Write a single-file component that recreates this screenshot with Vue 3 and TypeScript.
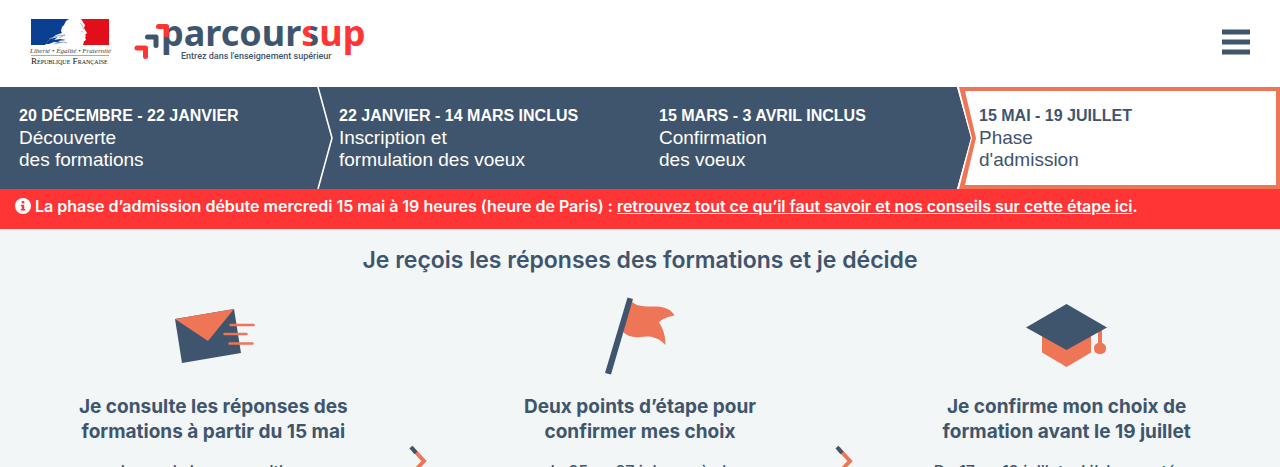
<script setup lang="ts">
interface Step {
  dates: string
  lines: string[]
  current?: boolean
  chevron?: boolean
}

interface Card {
  icon: 'mail' | 'flag' | 'cap'
  title: string[]
  text: string
}

const steps: Step[] = [
  { dates: '20 DÉCEMBRE - 22 JANVIER', lines: ['Découverte', 'des formations'], chevron: true },
  { dates: '22 JANVIER - 14 MARS INCLUS', lines: ['Inscription et', 'formulation des voeux'] },
  { dates: '15 MARS - 3 AVRIL INCLUS', lines: ['Confirmation', 'des voeux'] },
  { dates: '15 MAI - 19 JUILLET', lines: ['Phase', "d'admission"], current: true },
]

const cards: Card[] = [
  { icon: 'mail', title: ['Je consulte les réponses des', 'formations à partir du 15 mai'], text: 'Je reçois les propositions' },
  { icon: 'flag', title: ['Deux points d’étape pour', 'confirmer mes choix'], text: 'du 25 au 27 juin, après la' },
  { icon: 'cap', title: ['Je confirme mon choix de', 'formation avant le 19 juillet'], text: 'Du 17 au 19 juillet, si j’ai accepté un' },
]
</script>

<template>
  <div class="page">
    <header class="header">
      <div class="brands">
        <svg class="republic" viewBox="0 0 80 48" role="img" aria-label="République Française">
          <rect x="1" y="1" width="78" height="26" fill="#fff" />
          <path d="M1 1h38l-3 2-2 4-2 2-1 4 1 2-6 2-8 6-3 4H1z" fill="#0b3f92" />
          <path d="M51 1h28v26H53l1-4h1l1-2-1-1 1-2-1-1 2-2-3-5 1-3z" fill="#e20f1b" />
          <path d="M15 26l5-5 8-2-4 3 6-1 6 1-8 1 4 2-8-1-5 2z" fill="#0b3f92" />
          <path d="M19 21l8-3 8-1-6 3M24 26l9-2 4 1" fill="none" stroke="#7d96c5" stroke-width=".8" />
          <path d="M50 5l2 2 2 5M51 13l2 1" fill="none" stroke="#8b8e98" stroke-width=".6" />
          <text x="0" y="35" class="motto">Liberté • Égalité • Fraternité</text>
          <path d="M1 37.500h78" stroke="#555" stroke-width=".5" />
          <text x="1" y="46" class="name">R<tspan class="small">ÉPUBLIQUE</tspan> F<tspan class="small">RANÇAISE</tspan></text>
        </svg>
        <a href="#" class="logo" aria-label="Parcoursup">
          <svg viewBox="0 0 232 46">
            <defs>
              <linearGradient id="split" gradientUnits="userSpaceOnUse" x1="0" y1="0" x2="232" y2="0">
                <stop offset=".72" stop-color="#3f556d" />
                <stop offset=".72" stop-color="#ff3535" />
                <stop offset=".765" stop-color="#ff3535" />
                <stop offset=".765" stop-color="#3f556d" />
                <stop offset=".795" stop-color="#3f556d" />
                <stop offset=".795" stop-color="#ff3535" />
              </linearGradient>
            </defs>
            <text x="27" y="27" class="word" fill="url(#split)">parcoursup</text>
            <g fill="none" stroke-width="5" stroke-linejoin="round" stroke-linecap="round">
              <path d="M24.500 7.500h8V16" stroke="#ff3535" />
              <path d="M13.500 18H22v8.500" stroke="#3f556d" />
              <path d="M3 29h8.500v8.500" stroke="#ff3535" />
            </g>
            <text x="47" y="40" class="tagline">Entrez dans l'enseignement supérieur</text>
          </svg>
        </a>
      </div>
      <button class="burger" type="button" aria-label="Menu">
        <svg viewBox="0 0 28 26"><path d="M0 3h28M0 13h28M0 23h28" stroke="#3f556d" stroke-width="5" /></svg>
      </button>
    </header>

    <ol class="steps">
      <li v-for="step in steps" :key="step.dates" class="step" :class="{ current: step.current }">
        <svg v-if="step.chevron" class="chevron" viewBox="0 0 16 102" preserveAspectRatio="none" aria-hidden="true">
          <path d="M1 0l14 51L1 102" fill="none" stroke="#fff" stroke-width="1.600" />
        </svg>
        <svg v-if="step.current" class="notch" viewBox="0 0 20 102" preserveAspectRatio="none" aria-hidden="true">
          <path d="M0 0h7v102H0z" fill="#fff" />
          <path d="M0 0l14 51L0 102z" fill="#3f556d" />
          <path d="M14 51L0 0h2l14 51L2 102H0z" fill="#fff" />
          <path d="M2 0h5l12 51L7 102H2l13-51z" fill="#ee7556" />
        </svg>
        <a href="#" class="step-link">
          <strong>{{ step.dates }}</strong>
          <span v-for="line in step.lines" :key="line">{{ line }}</span>
        </a>
      </li>
    </ol>

    <p class="alert">
      <svg class="info" viewBox="0 0 16 16" aria-hidden="true">
        <circle cx="8" cy="8" r="8" fill="#fff" />
        <path d="M6.700 3h2.600v2.400H6.700zM5.800 6.700h3.400v4.200h1v1.600H5.800v-1.600h1V8.300h-1z" fill="#ff3535" />
      </svg>
      <span>La phase d’admission débute mercredi 15 mai à 19 heures (heure de Paris) : <a href="#">retrouvez tout ce qu’il faut savoir et nos conseils sur cette étape ici</a>.</span>
    </p>

    <main class="content">
      <h1>Je reçois les réponses des formations et je décide</h1>
      <ul class="cards">
        <li v-for="(card, i) in cards" :key="card.icon" class="card">
          <div class="body">
            <svg v-if="card.icon === 'mail'" class="icon" viewBox="0 0 120 80" aria-hidden="true">
              <path d="M22 24l59-10 7 44-59 10z" fill="#3f556d" />
              <path d="M22 24l59-10-26 32z" fill="#ee7556" />
              <path d="M77.500 30h23M71.500 39h22M76.500 48.500h23" stroke="#ee7556" stroke-width="2.500" stroke-linecap="round" />
            </svg>
            <svg v-else-if="card.icon === 'flag'" class="icon" viewBox="0 0 120 80" aria-hidden="true">
              <path d="M52 7c8 6 16 4 25 4.500 9 .5 15 4 17.500 9-6 1-12 3-15.500 7 4 6 6.500 13 6.500 22.500C77 41 69 41 60 42c-7 1-13-1-18-6z" fill="#ee7556" />
              <path d="M47.500 2.500L53 4 31 79.500 25 78z" fill="#3f556d" />
            </svg>
            <svg v-else class="icon" viewBox="0 0 120 80" aria-hidden="true">
              <path d="M35 40h49v17.500L59.500 72 35 57.500z" fill="#ee7556" />
              <path d="M91 34h4v17h-4z" fill="#ee7556" />
              <rect x="87" y="48" width="12" height="11" rx="5" fill="#ee7556" />
              <path d="M59.500 9L100 32.500 59.500 55 19 32.500z" fill="#3f556d" />
            </svg>
            <h2><template v-for="(line, n) in card.title" :key="line"><br v-if="n">{{ line }}</template></h2>
            <p>{{ card.text }}</p>
          </div>
          <svg v-if="i < 2" class="arrow" viewBox="0 0 16 30" aria-hidden="true">
            <path d="M1 2l12 13L1 28" fill="none" stroke="#ee7556" stroke-width="4" />
            <path d="M0 1l5 6" fill="none" stroke="#3f556d" stroke-width="4" />
          </svg>
        </li>
      </ul>
    </main>
  </div>
</template>

<style>
body {
  margin: 0;
  background: #f2f6f7;
}
</style>

<style scoped>
.page {
  color: #3f556d;
  font-family: Inter, 'Liberation Sans', sans-serif;
}
.header {
  display: flex;
  justify-content: space-between;
  align-items: center;
  box-sizing: border-box;
  height: 87px;
  padding: 0 30px 4px;
  background: #fff;
}
.brands {
  display: flex;
  align-items: center;
  gap: 24px;
}
.republic {
  display: block;
  width: 80px;
  height: 48px;
  overflow: visible;
}
.motto {
  font: italic 7px 'Liberation Serif', serif;
  fill: #444;
}
.name {
  font: 9px 'Liberation Serif', serif;
  fill: #111;
}
.small {
  font-size: 6px;
}
.logo svg {
  display: block;
  width: 232px;
  height: 46px;
  overflow: visible;
}
.word {
  font: 700 36px 'Noto Sans', sans-serif;
}
.tagline {
  font: 500 9px Roboto, sans-serif;
  fill: #3f556d;
}
.burger {
  padding: 0;
  border: 0;
  background: none;
  cursor: pointer;
}
.burger svg {
  display: block;
  width: 28px;
  height: 26px;
}
.steps {
  display: grid;
  grid-template-columns: repeat(4, 1fr);
  margin: 0;
  padding: 0;
  list-style: none;
  background: #3f556d;
}
.step {
  position: relative;
  color: #fff;
}
.step.current {
  background: #fff;
  color: #3f556d;
  box-shadow: inset 0 0 0 4px #ee7556;
}
.step-link {
  position: relative;
  display: block;
  padding: 18px 19px;
  color: inherit;
  font: 19px/22px 'Liberation Sans', Arial, sans-serif;
  text-decoration: none;
}
.step-link strong,
.step-link span {
  display: block;
}
.step-link strong {
  font-size: 16px;
}
.chevron {
  position: absolute;
  top: 0;
  right: -13px;
  width: 16px;
  height: 100%;
}
.notch {
  position: absolute;
  top: 0;
  left: -3px;
  width: 20px;
  height: 100%;
}
.alert {
  display: flex;
  gap: 4px;
  margin: 0;
  padding: 7px 15px 13px;
  background: #ff3535;
  color: #fff;
  font-size: 16px;
  font-weight: 600;
  line-height: 20px;
}
.alert a {
  color: inherit;
}
.info {
  flex: none;
  width: 16px;
  height: 16px;
  margin-top: 2px;
}
.content {
  padding: 16px 0 40px;
  text-align: center;
}
h1 {
  margin: 0 0 19px;
  font-size: 23px;
  font-weight: 600;
  line-height: 31px;
}
.cards {
  display: grid;
  grid-template-columns: repeat(3, 1fr);
  margin: 0;
  padding: 0;
  list-style: none;
}
.card {
  display: grid;
}
.body,
.arrow {
  grid-area: 1 / 1;
}
.icon {
  display: block;
  width: 120px;
  height: 80px;
  margin: 0 auto 19px;
}
h2 {
  margin: 0 0 15px;
  font-size: 19px;
  font-weight: 700;
  line-height: 25px;
}
.card p {
  margin: 0;
  font-size: 16px;
  font-weight: 500;
  line-height: 24px;
}
.arrow {
  justify-self: end;
  width: 16px;
  height: 30px;
  margin-top: 151px;
  overflow: visible;
}
</style>
